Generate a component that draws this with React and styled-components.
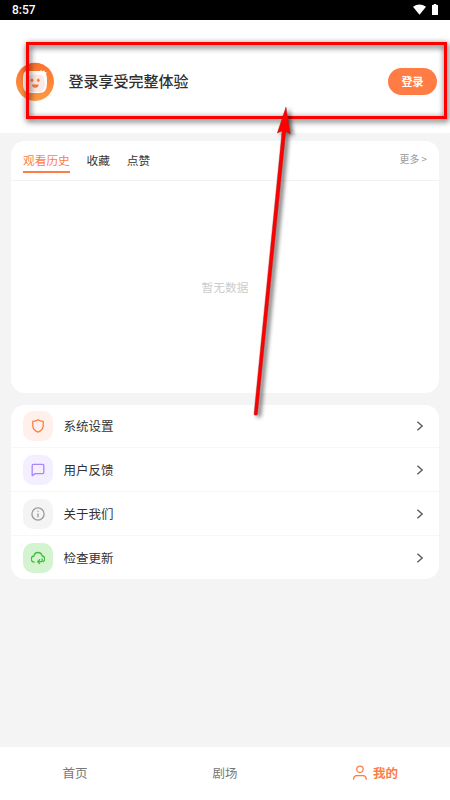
import React from "react";
import styled, { createGlobalStyle } from "styled-components";

const GlobalStyle = createGlobalStyle`
  * { box-sizing: border-box; }
  body {
    margin: 0;
    background: #f4f4f4;
    color: #333;
    font-family: "Noto Sans CJK SC", sans-serif;
  }
`;

const Page = styled.div`
  position: relative;
  display: flex;
  flex-direction: column;
  width: 450px;
  height: 800px;
  overflow: hidden;
  background: #f4f4f4;
`;

const StatusBar = styled.div`
  display: flex;
  flex: none;
  align-items: center;
  justify-content: space-between;
  height: 20px;
  padding: 0 12px;
  background: #000;
  color: #fff;
  font: 500 12px/20px Roboto, sans-serif;
`;

const StatusIcons = styled.div`
  display: flex;
  align-items: center;
  gap: 6px;
  height: 18px;
  padding-bottom: 2px;
`;

const Header = styled.header`
  display: flex;
  flex: none;
  align-items: center;
  height: 113px;
  padding: 10px 13px 0 16px;
  background: #fff;
`;

const Greeting = styled.div`
  flex: 1;
  margin-left: 14.5px;
  padding-bottom: 2px;
  color: #303030;
  font-size: 15px;
  font-weight: 500;
  line-height: 22px;
`;

const LoginButton = styled.button`
  width: 49px;
  height: 27px;
  padding: 0;
  border: 0;
  border-radius: 14px;
  background: #ff7c45;
  color: #fff;
  font: 700 11px/27px "Noto Sans CJK SC", sans-serif;
`;

const Card = styled.section`
  flex: none;
  margin: ${({ $top }) => $top}px 11px 0;
  border-radius: 14px;
  background: #fff;
  overflow: hidden;
`;

const TabBar = styled.div`
  display: flex;
  align-items: flex-start;
  gap: 16.8px;
  height: 40px;
  padding: 8px 12px 0;
  border-bottom: 1px solid #f2f2f2;
`;

const Tab = styled.div`
  height: 24px;
  border-bottom: 2px solid ${({ $active }) => ($active ? "#ff7c45" : "transparent")};
  color: ${({ $active }) => ($active ? "#ff7c45" : "#333")};
  font-size: 11.7px;
  line-height: 21px;
`;

const More = styled.div`
  margin-left: auto;
  color: #999;
  font-size: 9.9px;
  line-height: 21px;
`;

const Empty = styled.div`
  display: flex;
  align-items: center;
  justify-content: center;
  height: 212px;
  padding-bottom: 2px;
  color: #ccc;
  font-size: 11.7px;
`;

const Row = styled.div`
  display: flex;
  align-items: center;
  padding: 7px 14px 6px 12px;
  border-bottom: 1px solid #f7f7f7;
  font-size: 12.5px;
  line-height: 20px;

  &:first-child { padding-top: 6px; }
  &:last-child { border-bottom: 0; }
`;

const IconTile = styled.div`
  display: grid;
  place-items: center;
  width: 30px;
  height: 30px;
  margin-right: 10.5px;
  border-radius: 10px;
  background: ${({ $bg }) => $bg};
  color: ${({ $fg }) => $fg};
`;

const RowLabel = styled.div`
  flex: 1;
`;

const BottomNav = styled.nav`
  display: grid;
  flex: none;
  grid-template-columns: repeat(3, 1fr);
  height: 53px;
  margin-top: auto;
  padding-bottom: 2px;
  background: #fff;
`;

const NavItem = styled.div`
  display: flex;
  align-items: center;
  justify-content: center;
  gap: 6px;
  color: ${({ $active }) => ($active ? "#ff7c45" : "#777")};
  font-size: 12.5px;
  font-weight: ${({ $active }) => ($active ? 700 : 400)};
`;

const HighlightBox = styled.div`
  position: absolute;
  top: 42px;
  left: 26px;
  width: 421px;
  height: 77px;
  border: 3px solid #f00;
  filter: drop-shadow(1px 2px 3px rgba(0, 0, 0, 0.85));
`;

const Arrow = styled.svg`
  position: absolute;
  top: 100px;
  left: 240px;
  overflow: visible;
  filter: drop-shadow(3px 2px 2px rgba(0, 0, 0, 0.6));
`;

const LineIcon = ({ size = 14, stroke = 1.3, children }) => (
  <svg width={size} height={size} viewBox="0 0 14 14" fill="none" stroke="currentColor"
    strokeWidth={stroke} strokeLinecap="round" strokeLinejoin="round">
    {children}
  </svg>
);

const Avatar = () => (
  <svg width="38" height="39" viewBox="0 0 38 39">
    <defs>
      <linearGradient id="avatarFill" x1="0" y1="0" x2="0" y2="1">
        <stop offset="0" stopColor="#fb702d" />
        <stop offset="1" stopColor="#ff9a43" />
      </linearGradient>
    </defs>
    <ellipse cx="19" cy="19.8" rx="19" ry="19.1" fill="url(#avatarFill)" />
    <path d="M11 9h13l1.2-1 1 1.5 2.3-1.3.2 2 2-.1-.7 2C31 14 31 16 31 20c0 8-2 11-8 11h-8c-6 0-8-3-8-10S7 9 11 9Z" fill="#fff" />
    <rect x="11.5" y="12.5" width="17" height="17.5" rx="6" fill="#fde8e3" />
    <ellipse cx="16" cy="18.2" rx="1.4" ry="1.7" fill="#fa823e" />
    <ellipse cx="22.3" cy="18.2" rx="1.4" ry="1.7" fill="#fa823e" />
    <path d="M16 22.4h6.6c0 2-1.1 3.3-3.3 3.3S16 24.4 16 22.4Z" fill="#fa7540" />
  </svg>
);

const menu = [
  { label: "系统设置", bg: "#fff0eb", fg: "#ff7c45",
    icon: <path d="M7 .7c1.4 1 3 1.5 5.2 1.7v4.4c0 3-1.9 5-5.2 6.4-3.3-1.4-5.2-3.4-5.2-6.4V2.4C4 2.2 5.6 1.7 7 .7Z" /> },
  { label: "用户反馈", bg: "#f3efff", fg: "#a986fa",
    icon: <path d="M2.2 1.4h9.6c.6 0 1 .4 1 1v7.2c0 .6-.4 1-1 1H4.3l-3.1 2.1V2.4c0-.6.4-1 1-1Z" /> },
  { label: "关于我们", bg: "#f4f4f4", fg: "#999",
    icon: <><circle cx="7" cy="7" r="6.1" /><path d="M7 6.8v3M7 4.2v.1" /></> },
  { label: "检查更新", bg: "#d4f3d0", fg: "#42bd39",
    icon: <><path d="M3.1 11.2C1.2 10.9.2 9.6.2 8s1.2-2.8 2.8-3C3.3 2.8 4.8 1.5 7 1.5s3.7 1.3 4.1 3.5c1.7.2 2.7 1.4 2.7 2.9 0 1.3-.7 2.3-1.8 2.7" /><path d="M11.1 8V9.8c0 .6-.3.9-.9.9H7.2M8.6 8.8l-1.9 1.9 1.9 1.9" /></> },
];

export default function App() {
  return (
    <Page>
      <GlobalStyle />
      <StatusBar>
        <span>8:57</span>
        <StatusIcons>
          <svg width="13" height="11" viewBox="0 0 13 11"><path d="M0 2.8Q6.5-1.8 13 2.8L6.5 10.8Z" fill="#fff" /></svg>
          <svg width="6" height="11" viewBox="0 0 6 11"><path d="M1.7 0h2.6v1H6v10H0V1h1.7Z" fill="#fff" /></svg>
        </StatusIcons>
      </StatusBar>
      <Header>
        <Avatar />
        <Greeting>登录享受完整体验</Greeting>
        <LoginButton>登录</LoginButton>
      </Header>
      <Card $top={8}>
        <TabBar>
          <Tab $active>观看历史</Tab>
          <Tab>收藏</Tab>
          <Tab>点赞</Tab>
          <More>更多 &gt;</More>
        </TabBar>
        <Empty>暂无数据</Empty>
      </Card>
      <Card $top={12}>
        {menu.map(({ label, bg, fg, icon }) => (
          <Row key={label}>
            <IconTile $bg={bg} $fg={fg}><LineIcon>{icon}</LineIcon></IconTile>
            <RowLabel>{label}</RowLabel>
            <svg width="10" height="10" viewBox="0 0 10 10" fill="none" stroke="#555" strokeWidth="1.3">
              <path d="M2.4.8 7.2 5 2.4 9.2" />
            </svg>
          </Row>
        ))}
      </Card>
      <BottomNav>
        <NavItem>首页</NavItem>
        <NavItem>剧场</NavItem>
        <NavItem $active>
          <LineIcon size={15} stroke={1.2}>
            <circle cx="7.4" cy="4" r="3" />
            <path d="M1.6 13.4v-.8c0-1.7 1.1-2.7 3-2.7h5.6c1.9 0 3 1 3 2.7v.8" />
          </LineIcon>
          我的
        </NavItem>
      </BottomNav>
      <HighlightBox />
      <Arrow width="60" height="325" viewBox="0 0 60 325">
        <path d="M46 7 50.3 34 45.8 31.5 17.4 314.5Q15.8 316 14 314.5L42.1 31 37.3 33Z" fill="#f00" stroke="#9c2020" strokeWidth=".4" />
      </Arrow>
    </Page>
  );
}
